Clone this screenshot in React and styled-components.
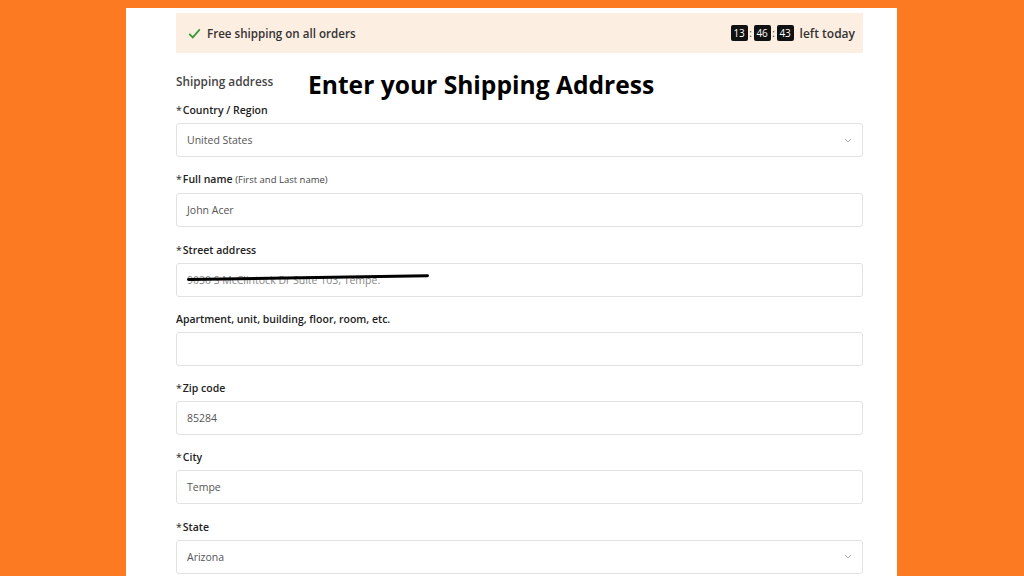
import React from "react";
import styled, { createGlobalStyle } from "styled-components";

const Global = createGlobalStyle`
  html, body { margin: 0; padding: 0; }
  body {
    background: #fc7b22;
    font-family: "Open Sans", "Noto Sans", sans-serif;
    overflow: hidden;
  }
`;

const Page = styled.div`
  width: 1024px;
  height: 576px;
  padding-top: 8px;
  box-sizing: border-box;
`;

const Panel = styled.main`
  margin-left: 126px;
  width: 771px;
  height: 568px;
  background: #ffffff;
  padding: 5px 34px 0 50px;
  box-sizing: border-box;
`;

const Banner = styled.div`
  height: 40px;
  background: #fdeee2;
  display: flex;
  align-items: center;
  justify-content: space-between;
  padding: 0 8px 0 12px;
`;

const BannerLeft = styled.div`
  display: flex;
  align-items: center;
  gap: 6px;
  font-size: 11.6px;
  font-weight: 600;
  color: #333;
`;

const Timer = styled.div`
  display: flex;
  align-items: center;
  font-size: 12px;
  font-weight: 600;
  color: #333;
`;

const TimeBox = styled.span`
  display: inline-flex;
  align-items: center;
  justify-content: center;
  width: 17px;
  height: 16px;
  background: #111;
  color: #fff;
  border-radius: 2px;
  font-size: 10px;
  font-weight: 400;
`;

const Colon = styled.span`
  width: 6px;
  text-align: center;
  font-size: 10px;
  font-weight: 400;
  color: #333;
`;

const Suffix = styled.span`
  margin-left: 6px;
`;

const HeadRow = styled.div`
  display: flex;
  align-items: flex-start;
  margin-top: 15px;
  height: 34px;
`;

const SectionTitle = styled.div`
  font-size: 11.8px;
  line-height: 26px;
  font-weight: 600;
  color: #444;
  width: 132px;
`;

const BigTitle = styled.h1`
  margin: 0;
  font-size: 24.6px;
  line-height: 34px;
  font-weight: 700;
  color: #000;
`;

const Form = styled.div`
  display: flex;
  flex-direction: column;
  gap: 14.3px;
`;

const Field = styled.div`
  display: flex;
  flex-direction: column;
  gap: 5px;
`;

const Label = styled.div`
  font-size: 10.5px;
  line-height: 16px;
  font-weight: 600;
  color: #222;
`;

const Star = styled.span`
  font-weight: 400;
  margin-right: 1px;
`;

const Hint = styled.span`
  font-weight: 400;
  font-size: 9.5px;
  color: #444;
`;

const Box = styled.div`
  position: relative;
  height: 34px;
  border: 1px solid #e2e2e2;
  border-radius: 3px;
  box-sizing: border-box;
  display: flex;
  align-items: center;
  justify-content: space-between;
  padding: 0 10px 0 10px;
  font-size: 10.5px;
  color: ${(p) => (p.$muted ? "#888" : "#555")};
`;

const Scribble = styled.span`
  position: absolute;
  left: 10px;
  top: 14px;
  width: 242px;
  height: 3px;
  background: #000;
  border-radius: 2px;
  transform: rotate(-0.9deg);
  transform-origin: left center;
`;

const Chevron = () => (
  <svg width="8" height="5" viewBox="0 0 8 5">
    <path d="M1 1l3 3 3-3" fill="none" stroke="#aaa" strokeWidth="1" />
  </svg>
);

const Check = () => (
  <svg width="13" height="11" viewBox="0 0 13 11">
    <path d="M1.2 5.8l3.6 3.6L11.8 1.4" fill="none" stroke="#3a9a3a" strokeWidth="1.8" />
  </svg>
);

function Input({ value, select, muted, scribble }) {
  return (
    <Box $muted={muted}>
      <span>{value}</span>
      {select && <Chevron />}
      {scribble && <Scribble />}
    </Box>
  );
}

export default function App() {
  return (
    <Page>
      <Global />
      <Panel>
        <Banner>
          <BannerLeft>
            <Check />
            Free shipping on all orders
          </BannerLeft>
          <Timer>
            <TimeBox>13</TimeBox>
            <Colon>:</Colon>
            <TimeBox>46</TimeBox>
            <Colon>:</Colon>
            <TimeBox>43</TimeBox>
            <Suffix>left today</Suffix>
          </Timer>
        </Banner>
        <HeadRow>
          <SectionTitle>Shipping address</SectionTitle>
          <BigTitle>Enter your Shipping Address</BigTitle>
        </HeadRow>
        <Form>
          <Field>
            <Label><Star>*</Star>Country / Region</Label>
            <Input value="United States" select />
          </Field>
          <Field>
            <Label><Star>*</Star>Full name <Hint>(First and Last name)</Hint></Label>
            <Input value="John Acer" />
          </Field>
          <Field>
            <Label><Star>*</Star>Street address</Label>
            <Input value="9030 S McClintock Dr Suite 103, Tempe." muted scribble />
          </Field>
          <Field>
            <Label>Apartment, unit, building, floor, room, etc.</Label>
            <Input value="" />
          </Field>
          <Field>
            <Label><Star>*</Star>Zip code</Label>
            <Input value="85284" />
          </Field>
          <Field>
            <Label><Star>*</Star>City</Label>
            <Input value="Tempe" />
          </Field>
          <Field>
            <Label><Star>*</Star>State</Label>
            <Input value="Arizona" select />
          </Field>
        </Form>
      </Panel>
    </Page>
  );
}
